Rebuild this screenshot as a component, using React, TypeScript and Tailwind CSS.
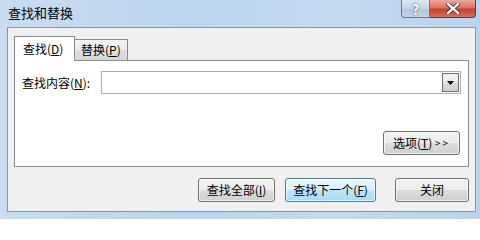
import React from "react";

const font = { fontFamily: '"Noto Sans CJK SC", "Noto Sans", sans-serif' };

const WinButton = ({
  children,
  width,
  primary = false,
}: {
  children: React.ReactNode;
  width: string;
  primary?: boolean;
}) => (
  <button
    className={`${width} h-[24px] rounded-[3px] border text-[12px] leading-none text-black flex items-center justify-center ${
      primary
        ? "border-[#3c7fb1] bg-[linear-gradient(#eaf6fd_0%,#d9f0fc_50%,#bee6fd_51%,#a7d9f5_100%)]"
        : "border-[#707070] bg-[linear-gradient(#f2f2f2_0%,#ebebeb_50%,#dddddd_51%,#cfcfcf_100%)]"
    } shadow-[inset_0_0_0_1px_rgba(255,255,255,0.7)]`}
  >
    {children}
  </button>
);

const App = () => {
  return (
    <div
      className="w-[480px] h-[219px] flex flex-col bg-[linear-gradient(90deg,#c9dcf0_0%,#bcd4ee_40%,#c4daf1_70%,#bad2ec_100%)] overflow-hidden"
      style={font}
    >
      {/* Title bar */}
      <div className="h-[27px] flex items-start shrink-0">
        <span className="pl-[8px] pt-[6px] text-[13px] text-black leading-none">
          查找和替换
        </span>
        <div className="ml-auto mr-[4px] flex">
          <div className="w-[29px] h-[18px] rounded-bl-[4px] border border-t-0 border-[#6d7a89] bg-[linear-gradient(#dbe6f2_0%,#c5d5e6_50%,#b3c6db_51%,#c2d3e5_100%)] flex items-center justify-center text-[14px] font-bold text-white [text-shadow:0_0_2px_#2a3a4f] leading-none">
            ?
          </div>
          <div className="w-[46px] h-[18px] rounded-br-[4px] border border-l-0 border-t-0 border-[#6d3a30] bg-[linear-gradient(#e9a99b_0%,#d9745f_45%,#c4402a_55%,#d6705a_100%)] flex items-center justify-center">
            <svg width="14" height="11" viewBox="0 0 14 11">
              <path
                d="M2 1 L12 10 M12 1 L2 10"
                stroke="#3b2a2a"
                strokeWidth="4"
                strokeLinecap="square"
              />
              <path
                d="M2 1 L12 10 M12 1 L2 10"
                stroke="#ffffff"
                strokeWidth="2.4"
                strokeLinecap="square"
              />
            </svg>
          </div>
        </div>
      </div>

      {/* Client area */}
      <div className="flex-1 ml-[7px] mr-[4px] mb-[7px] border border-[#8b97a5] bg-[#f0f0f0] flex flex-col pt-[8px] pl-[6px] pr-[6px]">
        {/* Tabs */}
        <div className="flex items-end h-[24px]">
          <div className="w-[61px] h-[25px] -mb-[1px] relative z-10 bg-white border border-b-0 border-[#898c95] flex items-center pl-[8px] text-[12px] text-black leading-none">
            查找(<u>D</u>)
          </div>
          <div className="w-[53px] h-[21px] border border-l-0 border-b-0 border-[#898c95] bg-[linear-gradient(#f3f3f3_0%,#ebebeb_50%,#dedede_51%,#d6d6d6_100%)] flex items-center pl-[6px] text-[12px] text-black leading-none">
            替换(<u>P</u>)
          </div>
        </div>

        {/* Panel */}
        <div className="h-[107px] border border-[#898c95] bg-white flex flex-col px-[7px] pt-[10px]">
          <div className="flex items-center">
            <span className="w-[79px] text-[12px] text-black leading-none">
              查找内容(<u>N</u>):
            </span>
            <div className="flex-1 h-[23px] border border-[#abadb3] bg-white flex justify-end items-center pr-[1px]">
              <div className="w-[17px] h-[19px] border border-[#707070] bg-[linear-gradient(#f2f2f2_0%,#ebebeb_50%,#dddddd_51%,#cfcfcf_100%)] flex items-center justify-center">
                <svg width="7" height="4" viewBox="0 0 7 4">
                  <path d="M0 0 H7 L3.5 4 Z" fill="#000" />
                </svg>
              </div>
            </div>
          </div>
          <div className="flex justify-end mt-[37px] pr-[1px]">
            <WinButton width="w-[77px]">
              选项(<u>T</u>)&nbsp;<span className="text-[10px] tracking-[2px]">&gt;&gt;</span>
            </WinButton>
          </div>
        </div>

        {/* Bottom buttons */}
        <div className="flex justify-end items-center mt-[11px]">
          <WinButton width="w-[77px]">
            查找全部(<u>I</u>)
          </WinButton>
          <div className="w-[10px]" />
          <WinButton width="w-[91px]" primary>
            查找下一个(<u>F</u>)
          </WinButton>
          <div className="w-[19px]" />
          <WinButton width="w-[74px]">关闭</WinButton>
        </div>
      </div>
    </div>
  );
};

export default App;
